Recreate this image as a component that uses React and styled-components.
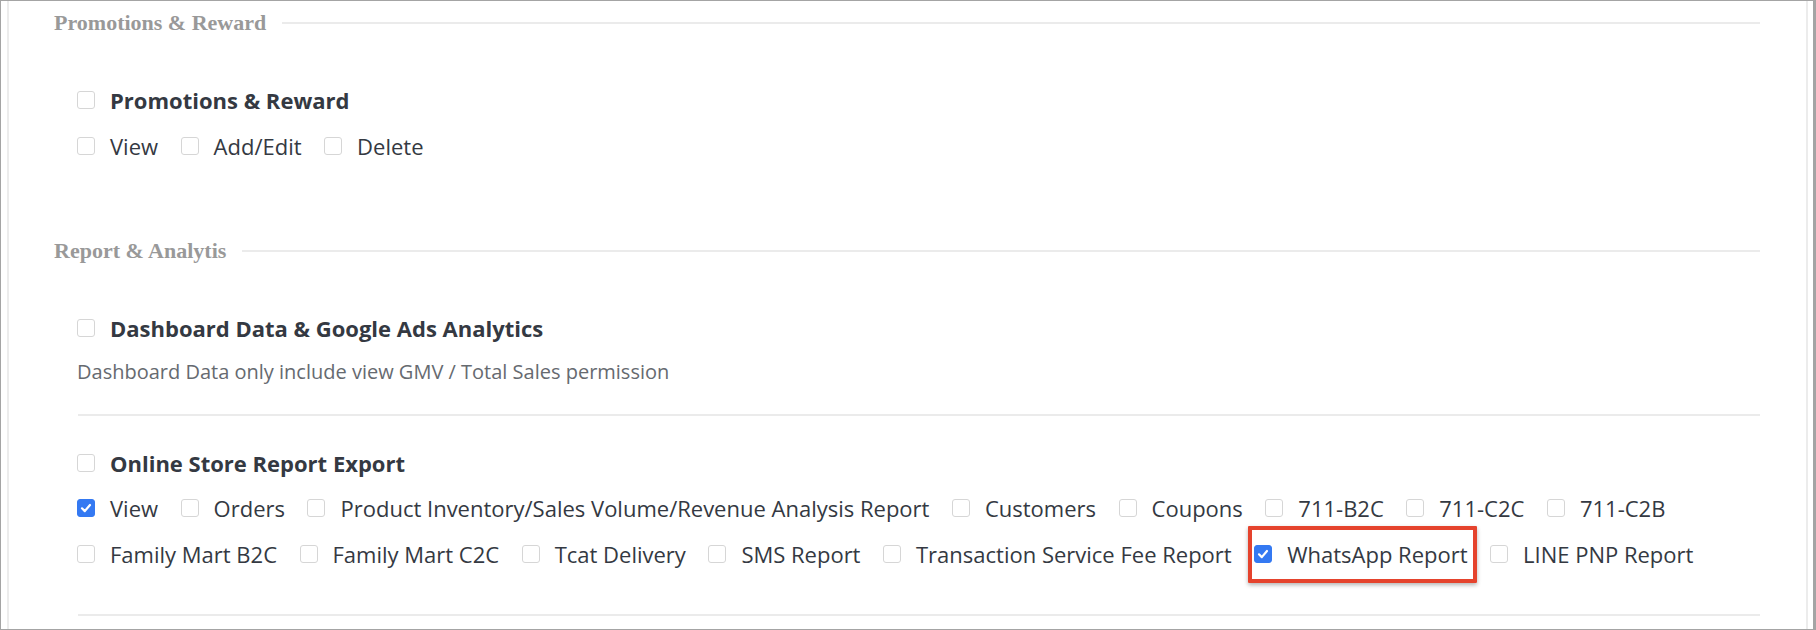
import React from 'react';
import styled, { createGlobalStyle } from 'styled-components';

const GlobalStyle = createGlobalStyle`
  html, body { margin: 0; padding: 0; background: #fff; }
  body { font-family: "Open Sans", "Liberation Sans", sans-serif; }
  * { box-sizing: border-box; }
`;

const Frame = styled.div`
  width: 1816px;
  height: 630px;
  border: 1px solid #a4a4a4;
  border-right-width: 3px;
  padding: 0 5px 0 6px;
  overflow: hidden;
  display: flex;
`;

const Panel = styled.div`
  flex: 1;
  border-left: 2px solid #ececec;
  border-right: 2px solid #ececec;
  padding: 7px 46px 0 45px;
`;

const SectionTitle = styled.div`
  display: flex;
  align-items: center;
  gap: 16px;
  height: 30px;
  margin-top: ${(p) => p.$mt || 0}px;
  font-family: "Liberation Serif", "Times New Roman", serif;
  font-weight: 700;
  font-size: 22px;
  color: #999;
  white-space: nowrap;
  &::after {
    content: '';
    flex: 1;
    height: 2px;
    background: #ebebeb;
  }
`;

const Block = styled.div`
  margin-top: ${(p) => p.$mt || 0}px;
  padding-left: 23px;
  display: flex;
  flex-direction: column;
`;

const Divider = styled.div`
  height: 2px;
  background: #ebebeb;
  margin: ${(p) => p.$mt || 0}px 0 0 24px;
`;

const Heading = styled.label`
  display: flex;
  align-items: center;
  gap: 15px;
  height: 30px;
  font-size: 22px;
  font-weight: 700;
  color: #343942;
`;

const Options = styled.div`
  display: flex;
  flex-wrap: wrap;
  column-gap: 22.5px;
  row-gap: 16px;
  margin-top: ${(p) => p.$mt || 16}px;
`;

const Item = styled.label`
  position: relative;
  display: inline-flex;
  align-items: center;
  gap: 15px;
  height: 30px;
  font-size: 22px;
  line-height: 30px;
  color: #343942;
  white-space: nowrap;
`;

const Note = styled.div`
  margin-top: 14px;
  font-size: 20px;
  line-height: 30px;
  color: #666a70;
`;

const Box = styled.span`
  flex: none;
  width: 18px;
  height: 18px;
  border-radius: 3px;
  border: 1px solid ${(p) => (p.$on ? '#3479f2' : '#d6d6d6')};
  background: ${(p) => (p.$on ? '#3479f2' : '#fff')};
  display: flex;
  align-items: center;
  justify-content: center;
`;

const Highlight = styled.span`
  position: absolute;
  top: -13px;
  bottom: -14px;
  left: -6px;
  right: -9px;
  border: 4px solid #e5432d;
  border-radius: 1px;
  box-shadow: 0 2px 4px rgba(0, 0, 0, 0.3);
  pointer-events: none;
`;

const Check = ({ on }) => (
  <Box $on={on}>
    {on && (
      <svg width="14" height="14" viewBox="0 0 14 14">
        <path d="M3 7.3 L5.8 10.1 L11 4" fill="none" stroke="#fff" strokeWidth="2.2" strokeLinecap="round" strokeLinejoin="round" />
      </svg>
    )}
  </Box>
);

const Option = ({ label, on, marked }) => (
  <Item>
    <Check on={on} />
    {label}
    {marked && <Highlight />}
  </Item>
);

const onlineOptions = [
  { label: 'View', on: true },
  { label: 'Orders' },
  { label: 'Product Inventory/Sales Volume/Revenue Analysis Report' },
  { label: 'Customers' },
  { label: 'Coupons' },
  { label: '711-B2C' },
  { label: '711-C2C' },
  { label: '711-C2B' },
  { label: 'Family Mart B2C' },
  { label: 'Family Mart C2C' },
  { label: 'Tcat Delivery' },
  { label: 'SMS Report' },
  { label: 'Transaction Service Fee Report' },
  { label: 'WhatsApp Report', on: true, marked: true },
  { label: 'LINE PNP Report' },
];

export default function App() {
  return (
    <>
      <GlobalStyle />
      <Frame>
        <Panel>
          <SectionTitle>Promotions &amp; Reward</SectionTitle>
          <Block $mt={47}>
            <Heading>
              <Check />
              Promotions &amp; Reward
            </Heading>
            <Options>
              <Option label="View" />
              <Option label="Add/Edit" />
              <Option label="Delete" />
            </Options>
          </Block>

          <SectionTitle $mt={75}>Report &amp; Analytis</SectionTitle>
          <Block $mt={47}>
            <Heading>
              <Check />
              Dashboard Data &amp; Google Ads Analytics
            </Heading>
            <Note>Dashboard Data only include view GMV / Total Sales permission</Note>
          </Block>
          <Divider $mt={27} />
          <Block $mt={32}>
            <Heading>
              <Check />
              Online Store Report Export
            </Heading>
            <Options $mt={15}>
              {onlineOptions.map((o) => (
                <Option key={o.label} {...o} />
              ))}
            </Options>
          </Block>
          <Divider $mt={45} />
        </Panel>
      </Frame>
    </>
  );
}
